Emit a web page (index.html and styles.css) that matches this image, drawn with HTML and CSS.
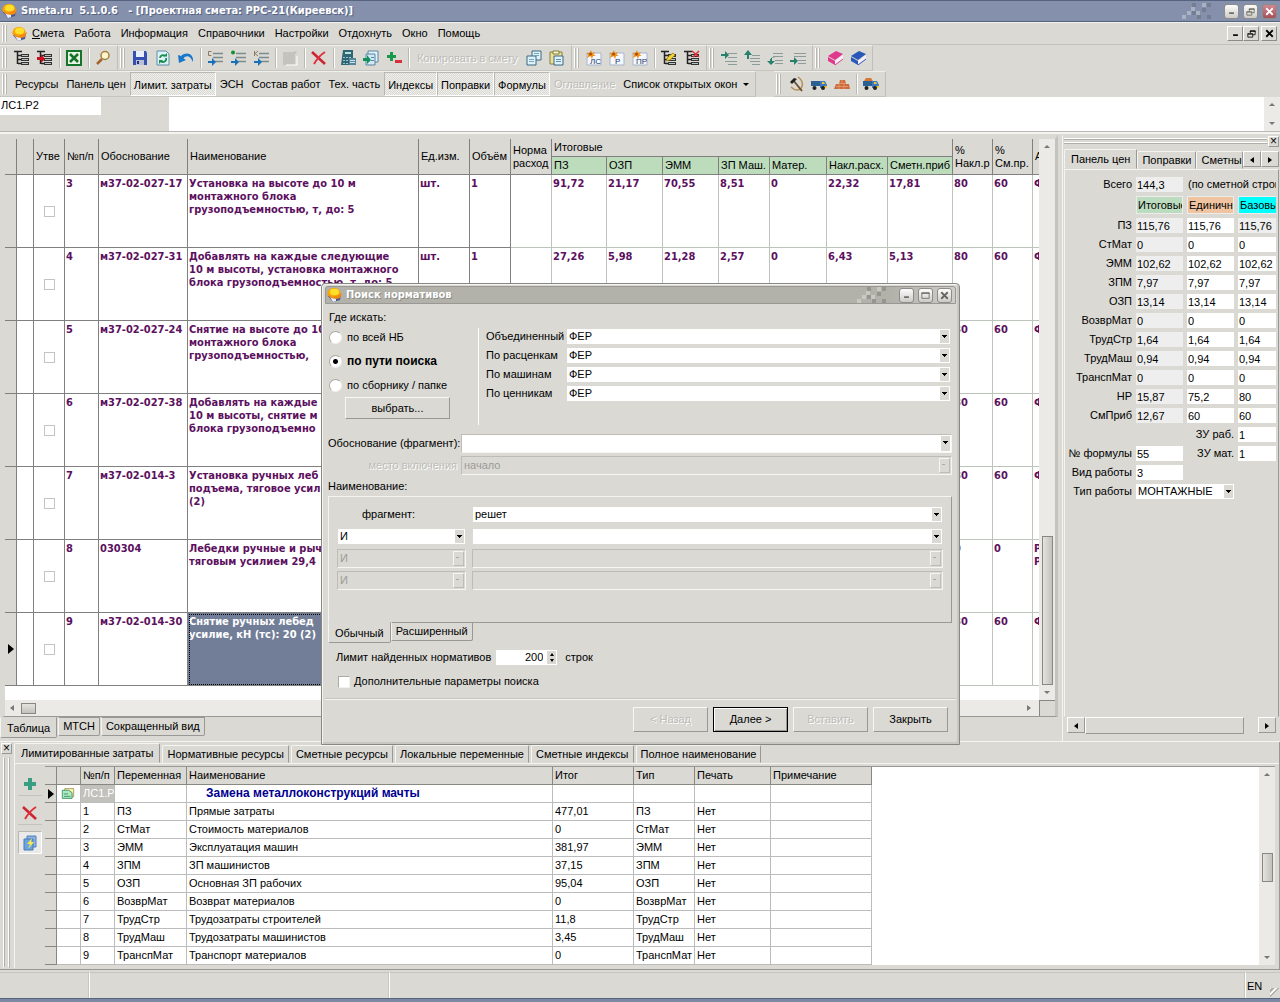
FILE: index.html
```html
<!DOCTYPE html>
<html lang="ru">
<head>
    <meta charset="utf-8">
    <title>Smeta.ru 5.1.0.6</title>
    <link rel="stylesheet" href="styles.css">
</head>
<body>
<!-- icons -->
<svg class="defs" aria-hidden="true">
    <symbol id="i-logo" viewBox="0 0 16 16"><path d="M2 9l5 6 7-2 1-5z" fill="#4a5690"/><path d="M4 10l3 5 3-1V9z" fill="#e8ecf8"/><ellipse cx="8" cy="6" rx="6.500" ry="5" fill="#f9a60b"/><ellipse cx="8.500" cy="5" rx="4.500" ry="3.200" fill="#ffe028"/><path d="M0 6l6 4 4-1 6-3-2 5-4 1-5-1z" fill="#f08a10"/></symbol>
    <symbol id="i-tree" viewBox="0 0 16 16"><path d="M0 1.500h8M3.500 2v12M4 5.500h3M4 9.500h3M4 13.500h3" stroke="#222" fill="none" stroke-width="1.500"/><path d="M7 5.500h8M7 9.500h8M7 13.500h8" stroke="#333" stroke-width="3"/><path d="M8 5.500h6M8 9.500h6M8 13.500h6" stroke="#b8c4c4"/></symbol>
    <symbol id="i-treearrow" viewBox="0 0 16 16"><use href="#i-tree"/><path d="M0 7h4V4l4 5-4 4v-3H0z" fill="#c81020"/></symbol>
    <symbol id="i-excel" viewBox="0 0 16 16"><path d="M1 1h14v14H1z" fill="#e8f4e4" stroke="#14742a" stroke-width="2"/><path d="M4 4l8 8M12 4l-8 8" stroke="#14742a" stroke-width="2.500"/></symbol>
    <symbol id="i-find" viewBox="0 0 16 16"><path d="M2 14l5-5" stroke="#a5642c" stroke-width="2.500"/><circle cx="10" cy="5.500" r="4" fill="#fff4cc" stroke="#a5803c" stroke-width="1.500"/></symbol>
    <symbol id="i-save" viewBox="0 0 16 16"><path d="M1 1h13l1 2v12H1z" fill="#3450b0"/><path d="M4 1h8v6H4z" fill="#e8eefc"/><path d="M4 10h8v5H4z" fill="#b8c0dc"/><path d="M5 11h2v3H5z" fill="#203070"/></symbol>
    <symbol id="i-refresh" viewBox="0 0 16 16"><path d="M2 1h9l3 3v11H2z" fill="#dff0fa" stroke="#5a90a8"/><path d="M5 8a3 3 0 0 1 5-2M11 8a3 3 0 0 1-5 3" stroke="#18904c" stroke-width="1.800" fill="none"/><path d="M8 6.500h4V3zM8 10H4v4z" fill="#18904c"/></symbol>
    <symbol id="i-undo" viewBox="0 0 16 16"><path d="M0 5l1 8 7-3-2.500-1.500C8 5 12 5 15 12c1-8-6-11-12-6z" fill="#1878cc"/></symbol>
    <symbol id="i-lines" viewBox="0 0 16 16"><path d="M6 3.500h10M6 7.500h10M8 11.500h8" stroke="#7c8c8c" stroke-width="1.300"/><path d="M1 11h4V8l4 4-4 4v-3H1z" fill="#1870b8"/></symbol>
    <symbol id="i-linec" viewBox="0 0 16 16"><use href="#i-lines"/><path d="M4.500 1.500h-3v4h3" stroke="#8c7c64" fill="none"/></symbol>
    <symbol id="i-linedot" viewBox="0 0 16 16"><use href="#i-lines"/><circle cx="3" cy="2.500" r="2" fill="#109030"/></symbol>
    <symbol id="i-linek" viewBox="0 0 16 16"><use href="#i-lines"/><path d="M1.500 1v5M5 1L2 3.500 5 6" stroke="#8c7c64" fill="none"/></symbol>
    <symbol id="i-grey" viewBox="0 0 16 16"><path d="M1 2h9l5-1-2 4v10H1z" fill="#c4c3be"/><path d="M15 6v9H4" stroke="#fff" fill="none"/></symbol>
    <symbol id="i-cross" viewBox="0 0 16 16"><path d="M1 2l13 12" stroke="#cc2430" stroke-width="2.500"/><path d="M14 2C9 5 6 9 3 14" stroke="#e0303c" stroke-width="2" fill="none"/></symbol>
    <symbol id="i-calc" viewBox="0 0 16 16"><path d="M3 0h10v15H1z" fill="#2f6674"/><path d="M5 2h6v2H5z" fill="#b8e0dc"/><path d="M3 7.500h9M3 10.500h9M3 13.500h5" stroke="#9cc4d0" stroke-dasharray="2 1"/><path d="M9 8h7v7H9z" fill="#56859c"/><path d="M10 10.500h5M10 12.500h5" stroke="#d0e4ee"/></symbol>
    <symbol id="i-docin" viewBox="0 0 16 16"><path d="M5 1h10v11H5z" fill="#e4f2fc" stroke="#5884a0"/><path d="M3 4h9v11H3z" fill="#d0e8f8" stroke="#5884a0"/><path d="M8 7.500h3M8 10.500h3" stroke="#5884a0"/><path d="M0 8h4V5l4 5-4 4v-3H0z" fill="#109058"/></symbol>
    <symbol id="i-plusminus" viewBox="0 0 16 16"><path d="M4 2h3v3h3v3H7v3H4V8H1V5h3z" fill="#18984c"/><path d="M9 10h7v3H9z" fill="#d83038"/></symbol>
    <symbol id="i-copy" viewBox="0 0 16 16"><path d="M6 1h9v9H6z" fill="#dff1fa" stroke="#386884"/><path d="M1 6h9v9H1z" fill="#dff1fa" stroke="#386884"/><path d="M8 3.500h5M8 5.500h5M3 9.500h5M3 11.500h5" stroke="#78a8b8"/></symbol>
    <symbol id="i-paste" viewBox="0 0 16 16"><path d="M1 2h12v12H1z" fill="#ecdf9c" stroke="#84803c"/><path d="M4 1h6v3H4z" fill="#f8f4cc" stroke="#84803c"/><path d="M5 6h9v9H5z" fill="#e0f2fc" stroke="#386884"/><path d="M7 9.500h5M7 11.500h5" stroke="#6090a8"/></symbol>
    <symbol id="i-new" viewBox="0 0 16 16"><path d="M1 3h14v12H1z" fill="#f4f8ff" stroke="#a8b4cc"/><path d="M5 0l1 3 3-1-1.500 2.500L10 6 7 6 6 9 4.500 6 1 8l1-3.500L0 3h3.500z" fill="#f09018"/><circle cx="4.500" cy="4" r="1.500" fill="#a85008"/></symbol>
    <symbol id="i-treepen" viewBox="0 0 16 16"><use href="#i-tree"/><path d="M5 11l2-4 5-4 2 2-5 5z" fill="#f8d428" stroke="#8c7010" stroke-width=".7"/></symbol>
    <symbol id="i-treex" viewBox="0 0 16 16"><use href="#i-tree"/><path d="M8 1l7 6M15 1L9 7" stroke="#dc3038" stroke-width="1.500"/></symbol>
    <symbol id="i-in1" viewBox="0 0 16 16"><path d="M7 3.500h9M7 7.500h9M4 11.500h12M7 14.500h9" stroke="#8c9c9c"/><path d="M0 4h4V1l4 4-4 4V6H0z" fill="#28806c"/></symbol>
    <symbol id="i-in2" viewBox="0 0 16 16"><path d="M8 5.500h8M6 8.500h10M6 11.500h10M8 14.500h8" stroke="#8c9c9c"/><path d="M3 9V5H0l4-5 4 5H5v4z" fill="#28806c"/></symbol>
    <symbol id="i-in3" viewBox="0 0 16 16"><path d="M6 3.500h10M6 6.500h10M8 10.500h8M8 13.500h8" stroke="#8c9c9c"/><path d="M8 7l-3 1v3h3l-4 4-4-4h3c0-3 2-4 5-4z" fill="#28806c"/></symbol>
    <symbol id="i-in4" viewBox="0 0 16 16"><path d="M4 3.500h12M4 6.500h12M8 10.500h8M8 13.500h8" stroke="#8c9c9c"/><path d="M0 10h4V7l4 4-4 4v-3H0z" fill="#28806c"/></symbol>
    <symbol id="i-book" viewBox="0 0 16 16"><path d="M1 6l8-5 7 3-8 6z" fill="currentColor"/><path d="M1 7l7 4v4l-7-4z" fill="currentColor"/><path d="M8 11l8-6v4l-8 6z" fill="#f8eef8"/><path d="M8 15l8-6" stroke="currentColor"/></symbol>
    <symbol id="i-hammer" viewBox="0 0 16 16"><path d="M10 1c6 4 6 12-1 13-3 0-5-2-6-3" stroke="#b49058" stroke-width="1.500" fill="none"/><path d="M5 4l9 11" stroke="#6c4c28" stroke-width="1.800"/><path d="M2 6l4-4 3 1-5 5z" fill="#222"/></symbol>
    <symbol id="i-truck" viewBox="0 0 16 16"><path d="M0 5h9v5H0z" fill="#2c6094"/><path d="M9 5h5l2 4v3H9z" fill="#4078bc"/><path d="M11 6h2l1 2h-3zM13 10h3v2h-3z" fill="#f0c838"/><circle cx="3.500" cy="12" r="2" fill="#222"/><circle cx="12" cy="12" r="2" fill="#222"/></symbol>
    <symbol id="i-bricks" viewBox="0 0 16 16"><path d="M0 13l2-5h3l1-4h5l1 4h3l1 5z" fill="#cc6c3c"/><path d="M2 10.500h12M5 7.500h7M5 8v5M10 8v5M8 4v4" stroke="#e09468"/></symbol>
    <symbol id="i-truckfull" viewBox="0 0 16 16"><use href="#i-truck"/><path d="M1 5l2-3h5l2 3z" fill="#d87830"/></symbol>
    <symbol id="i-plus" viewBox="0 0 16 16"><path d="M6 2h4v4h4v4h-4v4H6v-4H2V6h4z" fill="#38a080"/></symbol>
    <symbol id="i-flash" viewBox="0 0 16 16"><path d="M5 1h9v11H5z" fill="#88b4e4" stroke="#5080b8"/><path d="M2 4h9v11H2z" fill="#6ca4e0" stroke="#4878b0"/><path d="M10 3l-5 6h3l-2 5 6-7H9z" fill="#f8e850"/></symbol>
    <symbol id="i-sheet" viewBox="0 0 16 16"><path d="M4 2h11v10H4z" fill="#fff4b8" stroke="#a09040"/><path d="M1 4h8l4 3v7H1z" fill="#b0e8c4" stroke="#288c58"/><path d="M3 8.500h5M3 11.500h8" stroke="#288c58"/></symbol>
    <symbol id="i-min" viewBox="0 0 16 16"><path d="M5 10h6" stroke="currentColor" stroke-width="2"/></symbol>
    <symbol id="i-max" viewBox="0 0 16 16"><path d="M3.500 4.500h9v7h-9zM3 5.500h10" stroke="currentColor" fill="none"/></symbol>
    <symbol id="i-rest" viewBox="0 0 16 16"><path d="M3.500 8.500h6v4h-6zM6.500 8V4.500h6v5H10M6 5.500h7M3 8.500h7" stroke="currentColor" fill="none"/></symbol>
    <symbol id="i-x" viewBox="0 0 16 16"><path d="M4 4l8 8M12 4l-8 8" stroke="currentColor" stroke-width="2.200"/></symbol>
    <symbol id="i-pix" viewBox="0 0 30 16"><path d="M0 12h4v4H0zM9 4h4v4H9zM5 8h4v4H5zM20 0h4v4h-4zM14 8h4v4h-4z" fill="#fff" opacity=".3"/><path d="M10 0h4v4h-4zM10 8h4v4h-4zM15 12h4v4h-4zM20 5h4v4h-4zM25 0h4v4h-4zM25 12h4v4h-4z" fill="#444" opacity=".25"/></symbol>
</svg>

<header class="title">
    <svg class="ico"><use href="#i-logo"/></svg>
    <h1>Smeta.ru&nbsp; 5.1.0.6 &nbsp; - [Проектная смета: РРС-21(Киреевск)]</h1>
    <svg class="pix"><use href="#i-pix"/></svg>
    <div class="winbtns">
        <button aria-label="Свернуть"><svg><use href="#i-min"/></svg></button>
        <button aria-label="Восстановить"><svg><use href="#i-rest"/></svg></button>
        <button class="red" aria-label="Закрыть"><svg><use href="#i-x"/></svg></button>
    </div>
</header>

<nav class="menu">
    <span class="grip"></span>
    <svg class="ico"><use href="#i-logo"/></svg>
    <button><u>С</u>мета</button>
    <button>Работа</button>
    <button>Информация</button>
    <button>Справочники</button>
    <button>Настройки</button>
    <button>Отдохнуть</button>
    <button>Окно</button>
    <button>Помощь</button>
    <div class="mdi">
        <button aria-label="Свернуть"><svg><use href="#i-min"/></svg></button>
        <button aria-label="Восстановить"><svg><use href="#i-rest"/></svg></button>
        <button class="last" aria-label="Закрыть"><svg><use href="#i-x"/></svg></button>
    </div>
</nav>

<div class="tools">
    <div class="bar">
        <span class="grip"></span>
        <button class="tb"><svg class="ico"><use href="#i-tree"/></svg></button>
        <button class="tb"><svg class="ico"><use href="#i-treearrow"/></svg></button>
        <i class="sep"></i>
        <button class="tb"><svg class="ico"><use href="#i-excel"/></svg></button>
        <i class="sep"></i>
        <button class="tb"><svg class="ico"><use href="#i-find"/></svg></button>
    </div>
    <div class="bar">
        <span class="grip"></span>
        <button class="tb"><svg class="ico"><use href="#i-save"/></svg></button>
        <button class="tb"><svg class="ico"><use href="#i-refresh"/></svg></button>
        <button class="tb"><svg class="ico"><use href="#i-undo"/></svg></button>
        <i class="sep"></i>
        <button class="tb"><svg class="ico"><use href="#i-linec"/></svg></button>
        <button class="tb"><svg class="ico"><use href="#i-linedot"/></svg></button>
        <button class="tb"><svg class="ico"><use href="#i-linek"/></svg></button>
        <i class="sep"></i>
        <button class="tb" disabled><svg class="ico"><use href="#i-grey"/></svg></button>
        <i class="sep"></i>
        <button class="tb"><svg class="ico"><use href="#i-cross"/></svg></button>
        <i class="sep"></i>
        <button class="tb"><svg class="ico"><use href="#i-calc"/></svg></button>
        <button class="tb"><svg class="ico"><use href="#i-docin"/></svg></button>
        <button class="tb"><svg class="ico"><use href="#i-plusminus"/></svg></button>
        <i class="sep"></i>
        <button class="tx copy" disabled>Копировать в смету</button>
        <button class="tb"><svg class="ico"><use href="#i-copy"/></svg></button>
        <button class="tb"><svg class="ico"><use href="#i-paste"/></svg></button>
    </div>
    <div class="bar">
        <span class="grip"></span>
        <button class="tb"><svg class="ico" viewBox="0 0 16 16"><use href="#i-new"/><text x="4" y="14" class="icotext">ЛС</text></svg></button>
        <button class="tb"><svg class="ico" viewBox="0 0 16 16"><use href="#i-new"/><text x="6" y="14" class="icotext">Р</text></svg></button>
        <button class="tb"><svg class="ico" viewBox="0 0 16 16"><use href="#i-new"/><text x="4" y="14" class="icotext">ПР</text></svg></button>
        <i class="sep"></i>
        <button class="tb"><svg class="ico"><use href="#i-treepen"/></svg></button>
        <button class="tb"><svg class="ico"><use href="#i-treex"/></svg></button>
    </div>
    <div class="bar">
        <span class="grip"></span>
        <button class="tb"><svg class="ico"><use href="#i-in1"/></svg></button>
        <button class="tb"><svg class="ico"><use href="#i-in2"/></svg></button>
        <button class="tb"><svg class="ico"><use href="#i-in3"/></svg></button>
        <button class="tb"><svg class="ico"><use href="#i-in4"/></svg></button>
    </div>
    <div class="bar">
        <span class="grip"></span>
        <button class="tb pink"><svg class="ico"><use href="#i-book"/></svg></button>
        <button class="tb blue"><svg class="ico"><use href="#i-book"/></svg></button>
    </div>
</div>

<div class="tools">
    <div class="bar">
        <span class="grip"></span>
        <button class="tx">Ресурсы</button>
        <button class="tx">Панель цен</button>
        <button class="tx on">Лимит. затраты</button>
        <button class="tx">ЭСН</button>
        <button class="tx">Состав работ</button>
        <button class="tx">Тех. часть</button>
        <button class="tx on">Индексы</button>
        <button class="tx on">Поправки</button>
        <button class="tx on">Формулы</button>
        <button class="tx" disabled>Оглавление</button>
        <button class="tx wins">Список открытых окон <i class="tri down"></i></button>
    </div>
    <div class="bar far">
        <span class="grip"></span>
        <button class="tb"><svg class="ico"><use href="#i-hammer"/></svg></button>
        <button class="tb"><svg class="ico"><use href="#i-truck"/></svg></button>
        <button class="tb"><svg class="ico"><use href="#i-bricks"/></svg></button>
        <i class="sep"></i>
        <button class="tb"><svg class="ico"><use href="#i-truckfull"/></svg></button>
    </div>
</div>

<div class="formula">
    <input class="cellname" value="ЛС1.Р2" aria-label="Ячейка">
    <textarea class="celltext" aria-label="Формула"></textarea>
    <div class="vscroll pale"><i class="tri up"></i><i class="tri down"></i></div>
</div>

<main class="mid">
    <section class="left">
        <div class="gridbox">
            <div class="gridview">
                <table class="grid">
                    <colgroup>
                        <col class="w12"><col class="w17"><col class="w31"><col class="w34"><col class="w89"><col class="w231">
                        <col class="w51"><col class="w41"><col class="w41"><col class="w55"><col class="w56"><col class="w56">
                        <col class="w51"><col class="w57"><col class="w61"><col class="w65"><col class="w40"><col class="w40"><col class="w40">
                    </colgroup>
                    <thead>
                        <tr>
                            <th rowspan="2"></th><th rowspan="2"></th><th rowspan="2">Утве</th><th rowspan="2">№п/п</th>
                            <th rowspan="2">Обоснование</th><th rowspan="2">Наименование</th><th rowspan="2">Ед.изм.</th>
                            <th rowspan="2">Объём</th><th rowspan="2">Норма<br>расход</th><th colspan="7">Итоговые</th>
                            <th rowspan="2">%<br>Накл.р</th><th rowspan="2">%<br>См.пр.</th><th rowspan="2">А</th>
                        </tr>
                        <tr class="green">
                            <th>ПЗ</th><th>ОЗП</th><th>ЭММ</th><th>ЗП Маш.</th><th>Матер.</th><th>Накл.расх.</th><th>Сметн.приб</th>
                        </tr>
                    </thead>
                    <tbody>
                        <tr>
                            <th></th><td></td><td class="chk"><input type="checkbox" aria-label="Утв. 3"></td><td>3</td><td>м37-02-027-17</td>
                            <td>Установка на высоте до 10 м<br>монтажного блока<br>грузоподъемностью, т, до: 5</td>
                            <td>шт.</td><td>1</td><td></td><td>91,72</td><td>21,17</td><td>70,55</td><td>8,51</td><td>0</td><td>22,32</td><td>17,81</td><td>80</td><td>60</td><td>Ф</td>
                        </tr>
                        <tr>
                            <th></th><td></td><td class="chk"><input type="checkbox" aria-label="Утв. 4"></td><td>4</td><td>м37-02-027-31</td>
                            <td>Добавлять на каждые следующие<br>10 м высоты, установка монтажного<br>блока грузоподъемностью, т, до: 5</td>
                            <td>шт.</td><td>1</td><td></td><td>27,26</td><td>5,98</td><td>21,28</td><td>2,57</td><td>0</td><td>6,43</td><td>5,13</td><td>80</td><td>60</td><td>Ф</td>
                        </tr>
                        <tr>
                            <th></th><td></td><td class="chk"><input type="checkbox" aria-label="Утв. 5"></td><td>5</td><td>м37-02-027-24</td>
                            <td>Снятие на высоте до 10 м<br>монтажного блока<br>грузоподъемностью,</td>
                            <td></td><td></td><td></td><td></td><td></td><td></td><td></td><td></td><td></td><td></td><td>80</td><td>60</td><td>Ф</td>
                        </tr>
                        <tr>
                            <th></th><td></td><td class="chk"><input type="checkbox" aria-label="Утв. 6"></td><td>6</td><td>м37-02-027-38</td>
                            <td>Добавлять на каждые<br>10 м высоты, снятие м<br>блока грузоподъемно</td>
                            <td></td><td></td><td></td><td></td><td></td><td></td><td></td><td></td><td></td><td></td><td>80</td><td>60</td><td>Ф</td>
                        </tr>
                        <tr>
                            <th></th><td></td><td class="chk"><input type="checkbox" aria-label="Утв. 7"></td><td>7</td><td>м37-02-014-3</td>
                            <td>Установка ручных леб<br>подъема, тяговое усил<br>(2)</td>
                            <td></td><td></td><td></td><td></td><td></td><td></td><td></td><td></td><td></td><td></td><td>80</td><td>60</td><td>Ф</td>
                        </tr>
                        <tr>
                            <th></th><td></td><td class="chk"><input type="checkbox" aria-label="Утв. 8"></td><td>8</td><td>030304</td>
                            <td>Лебедки ручные и рыч<br>тяговым усилием 29,4</td>
                            <td></td><td></td><td></td><td></td><td></td><td></td><td></td><td></td><td></td><td></td><td>0</td><td>0</td><td>Р<br>Р</td>
                        </tr>
                        <tr>
                            <th class="cur"><i class="rowmark"></i></th><td></td><td class="chk"><input type="checkbox" aria-label="Утв. 9"></td><td>9</td><td>м37-02-014-30</td>
                            <td class="sel">Снятие ручных лебед<br>усилие, кН (тс): 20 (2)</td>
                            <td></td><td></td><td></td><td></td><td></td><td></td><td></td><td></td><td></td><td></td><td>80</td><td>60</td><td>Ф</td>
                        </tr>
                    </tbody>
                </table>
            </div>
            <div class="vscroll"><i class="tri up"></i><span class="thumb main"></span><i class="tri down"></i></div>
            <div class="hscroll"><i class="tri lt"></i><span class="thumb"></span><i class="tri rt"></i></div>
            <div class="corner"></div>
        </div>
        <div class="tabs bottom">
            <button class="tab active">Таблица</button>
            <button class="tab">МТСН</button>
            <button class="tab">Сокращенный вид</button>
        </div>
    </section>

    <aside class="right">
        <div class="dockhead"><span></span><button aria-label="Закрыть панель">×</button></div>
        <div class="tabs">
            <button class="tab active">Панель цен</button>
            <button class="tab">Поправки</button>
            <button class="tab cut">Сметные</button>
            <button class="nav" aria-label="Назад"><i class="tri lt"></i></button>
            <button class="nav" aria-label="Вперед"><i class="tri rt"></i></button>
        </div>
        <div class="pricebox">
            <div class="prices">
                <label for="total">Всего</label><input id="total" class="ro" value="144,3" readonly><span class="note">(по сметной строке)</span>
                <b class="head c1">Итоговые</b><b class="head c2">Единичные</b><b class="head c3">Базовые</b>
                <label for="p1">ПЗ</label><input id="p1" class="ro" value="115,76" readonly><input aria-label="ПЗ ед." value="115,76"><input class="ro" aria-label="ПЗ баз." value="115,76" readonly>
                <label for="p2">СтМат</label><input id="p2" class="ro" value="0" readonly><input aria-label="СтМат ед." value="0"><input aria-label="СтМат баз." value="0">
                <label for="p3">ЭММ</label><input id="p3" class="ro" value="102,62" readonly><input aria-label="ЭММ ед." value="102,62"><input aria-label="ЭММ баз." value="102,62">
                <label for="p4">ЗПМ</label><input id="p4" class="ro" value="7,97" readonly><input aria-label="ЗПМ ед." value="7,97"><input aria-label="ЗПМ баз." value="7,97">
                <label for="p5">ОЗП</label><input id="p5" class="ro" value="13,14" readonly><input aria-label="ОЗП ед." value="13,14"><input aria-label="ОЗП баз." value="13,14">
                <label for="p6">ВозврМат</label><input id="p6" class="ro" value="0" readonly><input aria-label="ВозврМат ед." value="0"><input aria-label="ВозврМат баз." value="0">
                <label for="p7">ТрудСтр</label><input id="p7" class="ro" value="1,64" readonly><input aria-label="ТрудСтр ед." value="1,64"><input aria-label="ТрудСтр баз." value="1,64">
                <label for="p8">ТрудМаш</label><input id="p8" class="ro" value="0,94" readonly><input aria-label="ТрудМаш ед." value="0,94"><input aria-label="ТрудМаш баз." value="0,94">
                <label for="p9">ТранспМат</label><input id="p9" class="ro" value="0" readonly><input aria-label="ТранспМат ед." value="0"><input aria-label="ТранспМат баз." value="0">
                <label for="p10">НР</label><input id="p10" class="ro" value="15,87" readonly><input aria-label="НР ед." value="75,2"><input aria-label="НР баз." value="80">
                <label for="p11">СмПриб</label><input id="p11" class="ro" value="12,67" readonly><input aria-label="СмПриб ед." value="60"><input aria-label="СмПриб баз." value="60">
                <label class="third" for="zr">ЗУ раб.</label><input id="zr" value="1">
                <label for="form">№ формулы</label><input id="form" value="55"><label for="zm">ЗУ мат.</label><input id="zm" value="1">
                <label for="kind">Вид работы</label><input id="kind" value="3"><span class="note"></span>
                <label for="type">Тип работы</label><span class="combo wide"><select id="type"><option>МОНТАЖНЫЕ</option></select></span>
            </div>
        </div>
        <div class="hbar"><button aria-label="Влево"><i class="tri lt"></i></button><span></span><button aria-label="Вправо"><i class="tri rt"></i></button></div>
    </aside>

</main>

<section class="lower">
    <div class="sidegrip"><button aria-label="Закрыть панель">×</button><span></span></div>
    <div class="lowermain">
        <div class="tabs">
            <button class="tab active">Лимитированные затраты</button>
            <button class="tab">Нормативные ресурсы</button>
            <button class="tab">Сметные ресурсы</button>
            <button class="tab">Локальные переменные</button>
            <button class="tab">Сметные индексы</button>
            <button class="tab">Полное наименование</button>
        </div>
        <div class="lowerbody">
            <div class="sidetools">
                <button><svg class="ico"><use href="#i-plus"/></svg></button>
                <button><svg class="ico"><use href="#i-cross"/></svg></button>
                <button class="on"><svg class="ico"><use href="#i-flash"/></svg></button>
            </div>
            <div class="listview">
                <table class="list">
                    <colgroup><col class="w12"><col class="w24"><col class="w34"><col class="w72"><col class="w366"><col class="w81"><col class="w61"><col class="w76"><col class="w101"></colgroup>
                    <thead>
                        <tr><th></th><th></th><th>№п/п</th><th>Переменная</th><th>Наименование</th><th>Итог</th><th>Тип</th><th>Печать</th><th>Примечание</th></tr>
                    </thead>
                    <tbody>
                        <tr><th class="cur"><i class="rowmark"></i></th><td class="pic"><svg><use href="#i-sheet"/></svg></td><td class="hl">ЛС1.Р2</td><td></td><td class="caption">Замена металлоконструкций мачты</td><td></td><td></td><td></td><td></td></tr>
                        <tr><th></th><td></td><td>1</td><td>ПЗ</td><td>Прямые затраты</td><td>477,01</td><td>ПЗ</td><td>Нет</td><td></td></tr>
                        <tr><th></th><td></td><td>2</td><td>СтМат</td><td>Стоимость материалов</td><td>0</td><td>СтМат</td><td>Нет</td><td></td></tr>
                        <tr><th></th><td></td><td>3</td><td>ЭММ</td><td>Эксплуатация машин</td><td>381,97</td><td>ЭММ</td><td>Нет</td><td></td></tr>
                        <tr><th></th><td></td><td>4</td><td>ЗПМ</td><td>ЗП машинистов</td><td>37,15</td><td>ЗПМ</td><td>Нет</td><td></td></tr>
                        <tr><th></th><td></td><td>5</td><td>ОЗП</td><td>Основная ЗП рабочих</td><td>95,04</td><td>ОЗП</td><td>Нет</td><td></td></tr>
                        <tr><th></th><td></td><td>6</td><td>ВозврМат</td><td>Возврат материалов</td><td>0</td><td>ВозврМат</td><td>Нет</td><td></td></tr>
                        <tr><th></th><td></td><td>7</td><td>ТрудСтр</td><td>Трудозатраты строителей</td><td>11,8</td><td>ТрудСтр</td><td>Нет</td><td></td></tr>
                        <tr><th></th><td></td><td>8</td><td>ТрудМаш</td><td>Трудозатраты машинистов</td><td>3,45</td><td>ТрудМаш</td><td>Нет</td><td></td></tr>
                        <tr><th></th><td></td><td>9</td><td>ТранспМат</td><td>Транспорт материалов</td><td>0</td><td>ТранспМат</td><td>Нет</td><td></td></tr>
                    </tbody>
                </table>
                <div class="vscroll"><i class="tri up"></i><span class="thumb small"></span><i class="tri down"></i></div>
            </div>
        </div>
    </div>
</section>

<footer class="status">
    <span class="s1"></span><span class="s2"></span><span class="s3"></span><span class="lang">EN</span>
</footer>
<div class="edge"></div>

<!-- search dialog -->
<form class="dialog" role="dialog" aria-labelledby="dlgtitle">
    <div class="dlgtitle">
        <svg class="ico"><use href="#i-logo"/></svg>
        <h2 id="dlgtitle">Поиск нормативов</h2>
        <svg class="pix"><use href="#i-pix"/></svg>
        <div class="winbtns">
            <button type="button" aria-label="Свернуть"><svg><use href="#i-min"/></svg></button>
            <button type="button" aria-label="Развернуть"><svg><use href="#i-max"/></svg></button>
            <button type="button" aria-label="Закрыть"><svg><use href="#i-x"/></svg></button>
        </div>
    </div>
    <div class="dlgbody">
        <div class="where">
            <div class="whereleft">
                <p>Где искать:</p>
                <label><input type="radio" name="where">по всей НБ</label>
                <label class="bold"><input type="radio" name="where" checked>по пути поиска</label>
                <label><input type="radio" name="where">по сборнику / папке</label>
                <button type="button" class="btn">выбрать...</button>
            </div>
            <div class="whereright">
                <label for="b1">Объединенный</label><span class="combo"><select id="b1"><option>ФЕР</option></select></span>
                <label for="b2">По расценкам</label><span class="combo"><select id="b2"><option>ФЕР</option></select></span>
                <label for="b3">По машинам</label><span class="combo"><select id="b3"><option>ФЕР</option></select></span>
                <label for="b4">По ценникам</label><span class="combo"><select id="b4"><option>ФЕР</option></select></span>
            </div>
        </div>
        <div class="basis">
            <label for="o1">Обоснование (фрагмент):</label><span class="combo framed"><select id="o1"><option></option></select></span>
            <label for="o2" class="off">место включения</label><span class="combo framed dis"><select id="o2" disabled><option>начало</option></select></span>
        </div>
        <p class="nametitle">Наименование:</p>
        <div class="namebox">
            <label for="n1" class="frag">фрагмент:</label><span class="combo"><select id="n1"><option>решет</option></select></span>
            <span class="combo"><select aria-label="Связка 1"><option>И</option></select></span><span class="combo"><select aria-label="Фрагмент 2"><option></option></select></span>
            <span class="combo framed dis"><select aria-label="Связка 2" disabled><option>И</option></select></span><span class="combo framed dis"><select aria-label="Фрагмент 3" disabled><option></option></select></span>
            <span class="combo framed dis"><select aria-label="Связка 3" disabled><option>И</option></select></span><span class="combo framed dis"><select aria-label="Фрагмент 4" disabled><option></option></select></span>
        </div>
        <div class="tabs bottom">
            <button type="button" class="tab active">Обычный</button>
            <button type="button" class="tab">Расширенный</button>
        </div>
        <div class="limit">
            <label for="lim">Лимит найденных нормативов</label>
            <span class="spin"><input id="lim" value="200"><span class="updown"><i class="tri up"></i><i class="tri down"></i></span></span>
            <span>строк</span>
        </div>
        <label class="extra"><input type="checkbox">Дополнительные параметры поиска</label>
    </div>
    <div class="dlgbtns">
        <button type="button" class="btn" disabled>&lt; Назад</button>
        <button type="button" class="btn default">Далее &gt;</button>
        <button type="button" class="btn" disabled>Вставить</button>
        <button type="button" class="btn">Закрыть</button>
    </div>
</form>
</body>
</html>
```
FILE: styles.css
```css
*{
    box-sizing: border-box;
}
body{
    margin: 0;
    min-height: 100vh;
    display: flex;
    flex-direction: column;
    background-color: #dad9d4;
    font: 11px/13px "Liberation Sans", sans-serif;
    color: black;
    position: relative;
    overflow: hidden;
}
button, input, select, textarea{
    font: inherit;
    color: inherit;
    margin: 0;
    padding: 0;
    border: 0;
    border-radius: 0;
    background: none;
    min-width: 0;
}
h1, h2, p{
    margin: 0;
    font-size: 11px;
}
p{
    font-weight: normal;
}
i{
    font-style: normal;
}
.defs{
    position: absolute;
    width: 0;
    height: 0;
}
.ico{
    width: 16px;
    height: 16px;
    flex: none;
    display: block;
}
.icotext{
    font-size: 8px;
    fill: #223366;
}

/* small triangles */
.tri{
    display: inline-block;
    flex: none;
    border: 3px solid transparent;
}
.tri.down{
    border-top-color: currentColor;
    border-bottom: 0;
}
.tri.up{
    border-bottom-color: currentColor;
    border-top: 0;
}
.tri.lt{
    border-right: 4px solid currentColor;
    border-left: 0;
}
.tri.rt{
    border-left: 4px solid currentColor;
    border-right: 0;
}

/* title bar */
.title{
    height: 22px;
    display: flex;
    align-items: center;
    padding: 0 3px 0 1px;
    background-color: #8490ac;
    border-top: 1px solid #56637f;
    border-bottom: 1px solid #56637f;
    color: white;
}
.title h1, .dialog h2{
    font: bold 11px/16px "DejaVu Sans Condensed", sans-serif;
    margin-left: 4px;
    flex: 1;
    white-space: nowrap;
    text-shadow: 1px 1px 0 #56637f;
}
.pix{
    width: 30px;
    height: 16px;
    margin-right: 12px;
}
.winbtns{
    display: flex;
    gap: 4px;
}
.winbtns button{
    width: 15px;
    height: 15px;
    padding: 0;
    border: 1px solid #8c8c88;
    border-radius: 3px;
    background: linear-gradient(#fcfcfc, #cccbc6);
    color: #66665e;
}
.winbtns svg, .mdi svg{
    width: 13px;
    height: 13px;
    display: block;
}
.winbtns .red{
    background: linear-gradient(#d08890, #a45058);
    color: white;
}

/* menu */
.menu{
    height: 23px;
    display: flex;
    align-items: center;
    border-top: 1px solid #f2f2ee;
    border-bottom: 1px solid #c2c1bc;
}
.menu button{
    padding: 0 5px;
}
.grip{
    align-self: stretch;
    width: 11px;
    margin: 2px 0;
    flex: none;
    background: linear-gradient(90deg, transparent 2px, #fff 2px 3px, #b8b7b2 3px 4px, transparent 4px 5px, #fff 5px 6px, #b8b7b2 6px 7px, transparent 7px);
}
.mdi{
    margin-left: auto;
    margin-right: 3px;
    display: flex;
}
.mdi button{
    width: 16px;
    height: 15px;
    padding: 0 1px;
    border: 1px solid;
    border-color: #fff #8c8c88 #8c8c88 #fff;
}
.mdi .last{
    margin-left: 2px;
}

/* toolbars */
.tools{
    height: 26px;
    display: flex;
}
.bar{
    display: flex;
    align-items: center;
    padding-right: 2px;
    border-top: 1px solid #f0f0ec;
    border-bottom: 1px solid #c6c5c0;
    border-right: 1px solid #c0bfba;
}
.far{
    margin-left: 18px;
}
.tb{
    width: 23px;
    height: 22px;
    padding: 0 3px;
}
.pink{
    color: #e0388c;
}
.blue{
    color: #2858b8;
}
.sep{
    width: 6px;
    align-self: stretch;
    margin: 2px 0;
    background: linear-gradient(90deg, transparent 2px, #bbbab5 2px 3px, #fff 3px 4px, transparent 4px);
}
.tx{
    padding: 0 4px;
    height: 24px;
    white-space: nowrap;
}
.copy{
    width: 111px;
}
.tx.on{
    border: 1px solid;
    border-color: #b8b7b2 #fff #fff #b8b7b2;
    padding: 2px 3px 0;
    background: repeating-conic-gradient(#eeeeea 0 25%, #dad9d4 0 50%) 0 0/2px 2px;
}
button:disabled{
    color: #bdbcb7;
    text-shadow: 1px 1px 0 #fff;
}
.wins .tri{
    margin: 0 0 2px 2px;
}

/* formula line */
.formula{
    height: 34px;
    display: flex;
    align-items: flex-start;
}
.cellname{
    width: 101px;
    height: 18px;
    background-color: white;
    padding: 0 0 2px 1px;
}
.celltext{
    flex: 1;
    height: 34px;
    margin-left: 68px;
    background-color: white;
    resize: none;
}

/* scroll bars */
.vscroll{
    width: 16px;
    align-self: stretch;
    flex: none;
    display: flex;
    flex-direction: column;
    align-items: center;
    padding: 6px 0;
    background-color: #ebeae6;
    color: #777;
}
.vscroll.pale{
    justify-content: space-between;
}
.vscroll .thumb{
    width: 11px;
    border: 1px solid #888883;
    background: linear-gradient(90deg, #e4e3de, #c2c1bc);
}
.thumb.main{
    height: 149px;
    margin: auto 0 6px;
}
.thumb.small{
    height: 29px;
    margin: auto 0 74px;
}
.hscroll{
    display: flex;
    align-items: center;
    gap: 7px;
    padding: 0 8px 0 5px;
    background-color: #ebeae6;
    color: #777;
}
.hscroll .thumb{
    width: 15px;
    height: 11px;
    border: 1px solid #888883;
    background: linear-gradient(#e4e3de, #c2c1bc);
}
.hscroll .rt{
    margin-left: auto;
}
.corner{
    border-left: 1px solid #888883;
    border-top: 1px solid #888883;
}

/* middle area */
.mid{
    flex: 1;
    display: flex;
    border-top: 1px solid #b8b7b2;
    box-shadow: inset 0 2px 0 #f4f4f0;
    padding-top: 3px;
}
.left{
    flex: 1;
    min-width: 0;
    display: flex;
    flex-direction: column;
    padding-right: 4px;
}
.gridbox{
    flex: 1;
    margin-left: 2px;
    display: grid;
    grid-template-columns: minmax(0, 1fr) 16px;
    grid-template-rows: 1fr 16px;
    border: 3px solid #dad9d4;
    border-right-color: #c4c3be;
    border-bottom: 1px solid #999894;
    border-top: 4px solid #dad9d4;
}
.gridview{
    background-color: white;
    overflow: hidden;
}
table{
    table-layout: fixed;
    border-collapse: separate;
    border-spacing: 0;
}
.grid{
    width: 1068px;
}
.grid th, .grid td{
    height: 73px;
    padding: 2px 1px;
    border-right: 1px solid #808080;
    border-bottom: 1px solid #808080;
    overflow: hidden;
    white-space: nowrap;
    text-align: left;
    vertical-align: top;
}
.grid td{
    font: bold 11px/13px "DejaVu Sans Condensed", sans-serif;
    color: #5c1060;
}
.grid td:nth-child(n+9){
    border-color: #bcc4bc;
}
.grid th, .list th{
    background-color: #dad9d4;
    font-weight: normal;
}
.grid thead th{
    height: 18px;
    padding: 0 2px;
    vertical-align: middle;
}
.grid .green th{
    background-color: #bcdcbc;
}
.grid .chk, .grid .cur{
    vertical-align: middle;
    text-align: center;
}
.chk input{
    appearance: none;
    width: 11px;
    height: 11px;
    border: 1px solid #c4c4c4;
    display: block;
    margin: auto;
}
.grid .sel{
    background-color: #727e98;
    color: white;
    outline: 1px dotted black;
    outline-offset: -2px;
}
.rowmark{
    display: block;
    width: 0;
    margin: auto;
    border: 5px solid transparent;
    border-left: 6px solid black;
    border-right: 0;
}

.w12{ width: 12px; }
.w17{ width: 17px; }
.w24{ width: 24px; }
.w31{ width: 31px; }
.w34{ width: 34px; }
.w40{ width: 40px; }
.w41{ width: 41px; }
.w51{ width: 51px; }
.w55{ width: 55px; }
.w56{ width: 56px; }
.w57{ width: 57px; }
.w61{ width: 61px; }
.w65{ width: 65px; }
.w72{ width: 72px; }
.w76{ width: 76px; }
.w81{ width: 81px; }
.w89{ width: 89px; }
.w101{ width: 101px; }
.w231{ width: 231px; }
.w366{ width: 366px; }

/* tabs */
.tabs{
    display: flex;
    align-items: flex-end;
    height: 20px;
    gap: 1px;
}
.tab{
    height: 18px;
    padding: 0 4px;
    white-space: nowrap;
    border: 1px solid;
    border-color: #f4f4f0 #999894 transparent #f4f4f0;
    border-radius: 2px 2px 0 0;
}
.tab.active{
    height: 20px;
    padding: 0 6px;
}
.tabs.bottom{
    align-items: flex-start;
    height: 24px;
}
.bottom .tab{
    border-color: #999894 #999894 #999894 #f4f4f0;
    border-radius: 0 0 2px 2px;
    height: 19px;
}
.bottom .active{
    border-top-color: transparent;
    height: 21px;
    padding-top: 2px;
    background-color: #dad9d4;
}

/* price panel */
.right{
    width: 218px;
    flex: none;
    display: flex;
    flex-direction: column;
    border-left: 1px solid #f4f4f0;
    padding: 0 1px 0 1px;
    overflow: hidden;
}
.dockhead{
    display: flex;
    align-items: center;
    height: 12px;
    margin-bottom: 2px;
}
.dockhead span{
    flex: 1;
    height: 6px;
    border: 1px solid;
    border-color: #fff #dad9d4 #b0afaa;
    border-left: 0;
    box-shadow: inset 0 1px 0 #b0afaa, inset 0 -1px 0 #fff;
}
.dockhead button, .sidegrip button{
    width: 11px;
    height: 11px;
    font-size: 12px;
    line-height: 9px;
    border: 1px solid;
    border-color: #fff #999894 #999894 #fff;
}
.right .tabs{
    gap: 0;
}
.right .cut{
    flex: 1;
    overflow: hidden;
}
.right .active{
    padding: 0 6px;
}
.nav, .hbar button{
    width: 18px;
    height: 16px;
    border: 1px solid;
    border-color: #fff #999894 #999894 #fff;
}
.nav{
    align-self: center;
}
.pricebox{
    flex: 1;
    border: 1px solid;
    border-color: #f4f4f0 #999894 transparent #f4f4f0;
    padding: 7px 2px 0 0;
}
.prices{
    display: grid;
    grid-template-columns: 67px 47px 47px 47px;
    grid-template-rows: 15px 18px;
    grid-auto-rows: 15px;
    gap: 4px;
    white-space: nowrap;
    overflow: hidden;
}
.prices label{
    text-align: right;
    line-height: 15px;
}
.prices input{
    background-color: white;
    padding: 0 1px;
    width: 47px;
    height: 15px;
}
.prices .ro{
    background-color: #eeeeee;
}
.note{
    grid-column: span 2;
    padding-left: 1px;
    line-height: 15px;
}
.head{
    font-weight: normal;
    line-height: 16px;
    padding-left: 1px;
    overflow: hidden;
    border: 1px solid #ececea;
}
.c1{
    grid-column: 2;
    background-color: #bcdcc0;
}
.c2{
    background-color: #f0c4a0;
}
.c3{
    background-color: #00ffff;
}
.third{
    grid-column: 3;
}
.prices .wide{
    grid-column: 2 / 4;
}
.hbar{
    display: flex;
    height: 17px;
    margin: 0 3px 7px;
}
.hbar span{
    flex: 1;
    margin-right: 14px;
    border: 1px solid;
    border-color: #fff #999894 #999894 #fff;
}

/* combo box */
.combo{
    position: relative;
    display: block;
    height: 15px;
}
.combo select{
    appearance: none;
    width: 100%;
    height: 100%;
    padding: 0 14px 0 2px;
    background-color: white;
    display: block;
}
.combo::after{
    content: "";
    position: absolute;
    right: 1px;
    top: 1px;
    bottom: 1px;
    width: 9px;
    background: linear-gradient(black, black) 2px 5px/5px 1px no-repeat, linear-gradient(black, black) 3px 6px/3px 1px no-repeat, linear-gradient(black, black) 4px 7px/1px 1px no-repeat, #dad9d4;
    pointer-events: none;
}
.combo.framed{
    height: 19px;
    border: 1px solid;
    border-color: #bdbcb7 #f6f6f2 #f6f6f2 #bdbcb7;
}
.combo.dis select{
    background: none;
    color: #9c9b97;
    opacity: 1;
}
.combo.dis::after{
    border: 1px solid;
    border-color: #f6f6f2 #bdbcb7 #bdbcb7 #f6f6f2;
    background: linear-gradient(#aaa, #aaa) 2px 5px/3px 1px no-repeat;
}

/* lower panel */
.lower{
    display: flex;
    height: 229px;
    border-top: 1px solid #f4f4f0;
    border-bottom: 1px solid #999894;
}
.sidegrip{
    width: 14px;
    padding: 1px 0 1px 1px;
    display: flex;
    flex-direction: column;
    gap: 3px;
}
.sidegrip span{
    flex: 1;
    width: 7px;
    margin-left: 2px;
    border: 1px solid;
    border-color: transparent #b0afaa transparent #fff;
    box-shadow: inset 1px 0 0 #b0afaa, inset -1px 0 0 #fff;
}
.lowermain{
    flex: 1;
    min-width: 0;
    padding-top: 1px;
    border-right: 1px solid #999894;
}
.lowermain .tabs{
    gap: 2px;
}
.lowerbody{
    display: flex;
    border-top: 1px solid #f4f4f0;
    border-left: 1px solid #f4f4f0;
    padding: 2px 4px 3px 3px;
}
.sidetools{
    width: 27px;
    padding-top: 7px;
    display: flex;
    flex-direction: column;
    gap: 6px;
}
.sidetools button{
    width: 24px;
    height: 23px;
    padding: 0 4px;
    border-bottom: 1px solid #c4c3be;
}
.sidetools .on{
    border: 1px solid;
    border-color: #b8b7b2 #fff #fff #b8b7b2;
    padding: 0 3px;
    background-color: #eaeae8;
}
.listview{
    flex: 1;
    display: flex;
    justify-content: space-between;
    background-color: white;
    border-top: 1px solid #999894;
}
.list{
    width: 827px;
    height: 198px;
}
.list th, .list td{
    height: 18px;
    padding: 0 2px;
    border-right: 1px solid #bcbcbc;
    border-bottom: 1px solid #bcbcbc;
    overflow: hidden;
    white-space: nowrap;
    text-align: left;
}
.list th{
    border-color: #888883;
}
.list .cur{
    padding: 0;
}
.list .rowmark{
    margin: 0 auto;
}
.list .pic{
    padding: 0 0 0 4px;
}
.pic svg{
    width: 14px;
    height: 13px;
    display: block;
}
.list .hl{
    background-color: #c2c1bc;
    color: white;
}
.list .caption{
    color: #000090;
    font-weight: bold;
    font-size: 12px;
    padding-left: 19px;
}

/* status */
.status{
    height: 28px;
    display: flex;
    padding-top: 2px;
}
.status span{
    border-right: 1px solid #fff;
    border-top: 1px solid #c6c5c0;
    box-shadow: inset -1px 0 0 #c6c5c0;
}
.s1{
    width: 90px;
}
.s2{
    width: 300px;
}
.s3{
    flex: 1;
}
.status .lang{
    width: 34px;
    padding: 7px 0 0 1px;
    background: repeating-linear-gradient(135deg, #fff 0 1px, #b0afaa 1px 3px, #dad9d4 3px 4px) 100% 100%/10px 10px no-repeat;
    clip-path: polygon(0 0, 100% 0, 100% 60%, 72% 100%, 0 100%);
    border-right: 0;
    box-shadow: none;
}
.edge{
    height: 4px;
    background-color: #7c88a4;
    border-top: 1px solid #56637f;
}

/* search window */
.dialog{
    position: absolute;
    left: 321px;
    top: 283px;
    width: 639px;
    background-color: #dad9d4;
    border: 1px solid #888883;
    border-radius: 4px 4px 0 0;
    box-shadow: inset 1px 1px 0 #f4f4f0, inset -2px -2px 0 #c8c7c2;
    padding: 2px 3px 0;
}
.dlgtitle{
    display: flex;
    align-items: center;
    height: 18px;
    padding: 0 3px 0 0;
    background: linear-gradient(90deg, #b2b1aa 90%, #cfcec9);
    border: 1px solid #999894;
    border-radius: 3px 3px 0 0;
    color: white;
}
.dialog h2{
    text-shadow: 1px 1px 0 #8c8c86;
}
.dlgbody{
    padding: 6px 4px 0 3px;
}
.where{
    display: flex;
    height: 117px;
}
.whereleft{
    width: 150px;
    display: flex;
    flex-direction: column;
    align-items: flex-start;
    margin-right: 7px;
}
.whereleft p{
    height: 15px;
    line-height: 15px;
    padding-left: 1px;
}
.whereleft label{
    display: flex;
    align-items: center;
    height: 24px;
    gap: 5px;
}
.whereleft .btn{
    margin-left: 17px;
    width: 105px;
    height: 22px;
    flex: none;
}
.whereleft .bold{
    font-weight: bold;
    font-size: 12px;
}
input[type=radio]{
    appearance: none;
    width: 13px;
    height: 13px;
    margin-left: 1px;
    border-radius: 50%;
    background-color: white;
    border: 1px solid;
    border-color: #aaa9a4 #f0f0ec #f0f0ec #aaa9a4;
}
input[type=radio]:checked{
    background: radial-gradient(circle, black 2px, white 3px);
}
.whereright{
    flex: 1;
    display: grid;
    grid-template-columns: 81px 1fr;
    grid-auto-rows: 15px;
    align-content: start;
    gap: 4px 0;
    margin-top: 18px;
    padding: 1px 2px 0 7px;
    height: 97px;
    margin-left: -7px;
    border-left: 1px solid #fff;
}
.whereright label, .basis label{
    line-height: 15px;
    white-space: nowrap;
}
.basis{
    display: grid;
    grid-template-columns: 133px 1fr;
    gap: 3px 0;
    align-items: center;
    margin-top: 7px;
}
.basis .off{
    text-align: right;
    padding-right: 4px;
    color: #bdbcb7;
    text-shadow: 1px 1px 0 #fff;
}
.nametitle{
    height: 21px;
    line-height: 22px;
}
.namebox{
    display: grid;
    grid-template-columns: 129px 1fr;
    grid-auto-rows: 19px;
    align-items: center;
    gap: 3px 6px;
    height: 127px;
    align-content: start;
    padding: 8px 8px 0;
    border: 1px solid;
    border-color: #f4f4f0 #999894 #999894 #f4f4f0;
}
.namebox .combo:not(.framed){
    margin: 0 1px;
}
.frag{
    padding-left: 25px;
}
.dialog .tabs{
    margin-top: -1px;
    gap: 0;
    height: 23px;
}
.limit{
    display: flex;
    align-items: center;
    gap: 8px;
    height: 24px;
    padding-left: 8px;
}
.spin{
    display: flex;
    width: 61px;
    height: 15px;
    background-color: white;
    margin-left: -3px;
}
.spin input{
    flex: 1;
    text-align: right;
    padding-right: 4px;
}
.updown{
    width: 9px;
    margin: 1px 1px 1px 0;
    display: flex;
    flex-direction: column;
    align-items: center;
    justify-content: space-between;
    background-color: #dad9d4;
    padding: 2px 0;
}
.updown .tri{
    border-left-width: 2px;
    border-right-width: 2px;
}
.extra{
    display: flex;
    align-items: center;
    gap: 4px;
    height: 25px;
    padding-left: 10px;
}
.extra input{
    appearance: none;
    width: 12px;
    height: 12px;
    background-color: white;
    border: 1px solid;
    border-color: #aaa9a4 #f0f0ec #f0f0ec #aaa9a4;
}
.dlgbtns{
    display: flex;
    justify-content: flex-end;
    gap: 5px;
    margin-top: 4px;
    padding: 8px 8px 12px;
    border-top: 1px solid #c4c3be;
    box-shadow: inset 0 1px 0 #f4f4f0;
}
.btn{
    border: 1px solid;
    border-color: #f8f8f4 #999894 #999894 #f8f8f4;
    white-space: nowrap;
}
.dlgbtns .btn{
    width: 75px;
    height: 25px;
}
.btn.default{
    border-color: black;
    box-shadow: inset 1px 1px 0 #fff, inset -1px -1px 0 #999894;
}
```
